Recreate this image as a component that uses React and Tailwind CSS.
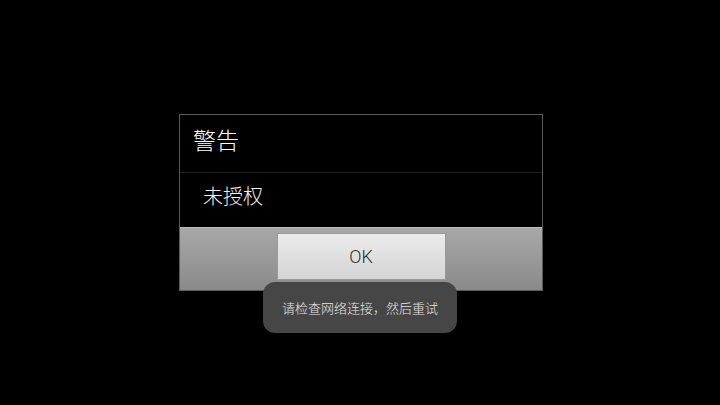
import React from 'react';

export default function App() {
    return (
        <div className="w-[720px] h-[405px] bg-black relative overflow-hidden" style={{ fontFamily: '"Noto Sans CJK SC", "Noto Sans", sans-serif' }}>
            <div className="absolute left-[179px] top-[114px] w-[364px] h-[177px] border border-[#5a5a5a] flex flex-col bg-black">
                <div className="h-[58px] border-b border-[#1e1e1e] flex items-center pl-[13px] pb-[8px]">
                    <span className="text-[23px] text-white leading-none font-light">警告</span>
                </div>
                <div className="h-[54px] flex items-center pl-[23px] pb-[8px]">
                    <span className="text-[20px] text-[#f4f4f4] leading-none font-light">未授权</span>
                </div>
                <div className="flex-1 bg-gradient-to-b from-[#a8a8a8] to-[#8a8a8a] border-t border-[#bdbdbd] flex justify-center pt-[5px]">
                    <button className="w-[169px] h-[47px] bg-gradient-to-b from-[#ececec] to-[#d4d4d4] border border-[#9a9a9a] text-[#2a2a2a] text-[18px] font-light" style={{ fontFamily: 'Roboto, "Noto Sans", sans-serif' }}>
                        OK
                    </button>
                </div>
            </div>
            <div className="absolute left-[263px] top-[282px] w-[194px] h-[51px] rounded-[12px] bg-[#464646] flex items-center justify-center">
                <span className="text-[13px] text-[#e6e6e6] font-light">请检查网络连接，然后重试</span>
            </div>
        </div>
    );
}
